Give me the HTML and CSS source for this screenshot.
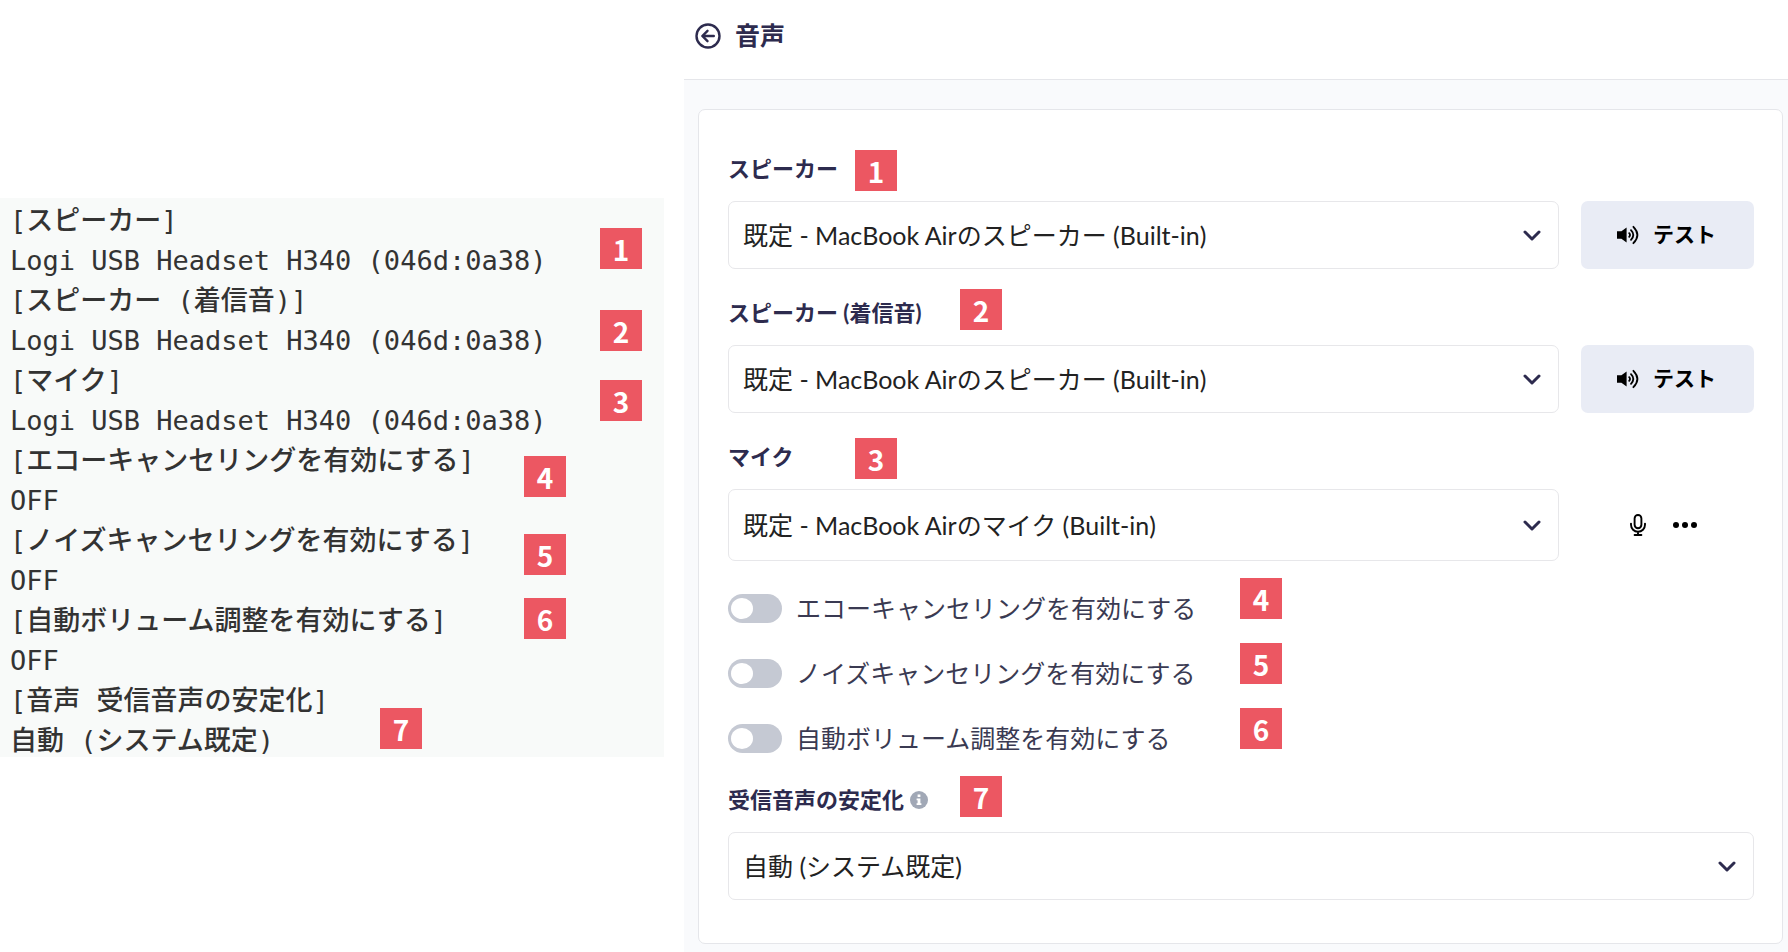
FILE: index.html
```html
<!DOCTYPE html>
<html lang="ja">
<head>
  <meta charset="UTF-8" />
  <meta name="viewport" content="width=device-width, initial-scale=1.0" />
  <title>音声</title>
  <link rel="stylesheet" href="styles.css">
</head>
<body>
  <div class="page">

    <section class="log-column">
      <div class="log">
        <div>[スピーカー]</div>
        <div>Logi USB Headset H340 (046d:0a38)</div>
        <div>[スピーカー (着信音)]</div>
        <div>Logi USB Headset H340 (046d:0a38)</div>
        <div>[マイク]</div>
        <div>Logi USB Headset H340 (046d:0a38)</div>
        <div>[エコーキャンセリングを有効にする]</div>
        <div>OFF</div>
        <div>[ノイズキャンセリングを有効にする]</div>
        <div>OFF</div>
        <div>[自動ボリューム調整を有効にする]</div>
        <div>OFF</div>
        <div>[音声 受信音声の安定化]</div>
        <div>自動 (システム既定)</div>

        <span class="badge log-1">1</span>
        <span class="badge log-2">2</span>
        <span class="badge log-3">3</span>
        <span class="badge log-4">4</span>
        <span class="badge log-5">5</span>
        <span class="badge log-6">6</span>
        <span class="badge log-7">7</span>
      </div>
    </section>

    <main class="settings">
      <header class="header">
        <button class="icon-button" type="button" aria-label="戻る">
          <svg width="26" height="26" viewBox="0 0 26 26" fill="none" stroke="currentColor" stroke-width="2.4" stroke-linecap="round" stroke-linejoin="round">
            <circle cx="13" cy="13" r="11.5" />
            <path d="M18.8 13H8M12.5 7.8L7.3 13l5.2 5.2" />
          </svg>
        </button>
        <h1>音声</h1>
      </header>

      <form class="card">
        <div class="field">
          <div class="label-row">
            <label for="speaker">スピーカー</label>
            <span class="badge near">1</span>
          </div>
          <div class="control-row">
            <div class="select">
              <select id="speaker"><option>既定 - MacBook Airのスピーカー (Built-in)</option></select>
              <svg class="chevron" width="18" height="12" viewBox="0 0 18 12"><path d="M2 2l7 7 7-7" /></svg>
            </div>
            <button class="test" type="button">
              <svg width="22" height="20" viewBox="0 0 22 20" fill="none" stroke="currentColor" stroke-width="1.8" stroke-linecap="round">
                <path d="M0 6.2h4.4L9.6 2.6v14.8l-5.2-3.6H0z" fill="currentColor" stroke="none" />
                <path d="M12.2 8.2q1.6 1.8 0 3.6M14 5.2q4.6 4.8 0 9.6M16.4 1.8q8 8.2 0 16.4" />
              </svg>
              <span>テスト</span>
            </button>
          </div>
        </div>

        <div class="field">
          <div class="label-row">
            <label for="ringer">スピーカー (着信音)</label>
            <span class="badge middle">2</span>
          </div>
          <div class="control-row">
            <div class="select">
              <select id="ringer"><option>既定 - MacBook Airのスピーカー (Built-in)</option></select>
              <svg class="chevron" width="18" height="12" viewBox="0 0 18 12"><path d="M2 2l7 7 7-7" /></svg>
            </div>
            <button class="test" type="button">
              <svg width="22" height="20" viewBox="0 0 22 20" fill="none" stroke="currentColor" stroke-width="1.8" stroke-linecap="round">
                <path d="M0 6.2h4.4L9.6 2.6v14.8l-5.2-3.6H0z" fill="currentColor" stroke="none" />
                <path d="M12.2 8.2q1.6 1.8 0 3.6M14 5.2q4.6 4.8 0 9.6M16.4 1.8q8 8.2 0 16.4" />
              </svg>
              <span>テスト</span>
            </button>
          </div>
        </div>

        <div class="field">
          <div class="label-row">
            <label for="mic">マイク</label>
            <span class="badge near">3</span>
          </div>
          <div class="control-row">
            <div class="select tall">
              <select id="mic"><option>既定 - MacBook Airのマイク (Built-in)</option></select>
              <svg class="chevron" width="18" height="12" viewBox="0 0 18 12"><path d="M2 2l7 7 7-7" /></svg>
            </div>
            <div class="mic-actions">
              <button class="icon-button" type="button" aria-label="マイク">
                <svg width="16" height="22" viewBox="0 0 16 22" fill="none" stroke="currentColor" stroke-width="1.9" stroke-linecap="round">
                  <rect x="4.6" y="1" width="6.8" height="13.2" rx="3.4" />
                  <path d="M1 9.6v1.2a7 7 0 0 0 14 0V9.6M8 17.8v3M4.6 21h6.8" />
                </svg>
              </button>
              <button class="icon-button" type="button" aria-label="その他">
                <svg width="24" height="8" viewBox="0 0 24 8" fill="currentColor">
                  <circle cx="3" cy="4" r="3" />
                  <circle cx="12" cy="4" r="3" />
                  <circle cx="21" cy="4" r="3" />
                </svg>
              </button>
            </div>
          </div>
        </div>

        <div class="toggles">
          <div class="toggle-row">
            <input type="checkbox" id="echo">
            <label for="echo">エコーキャンセリングを有効にする</label>
            <span class="badge far">4</span>
          </div>
          <div class="toggle-row">
            <input type="checkbox" id="noise">
            <label for="noise">ノイズキャンセリングを有効にする</label>
            <span class="badge far">5</span>
          </div>
          <div class="toggle-row">
            <input type="checkbox" id="volume">
            <label for="volume">自動ボリューム調整を有効にする</label>
            <span class="badge far">6</span>
          </div>
        </div>

        <div class="field">
          <div class="label-row">
            <label for="stable">受信音声の安定化</label>
            <svg class="info" width="18" height="18" viewBox="0 0 18 18">
              <circle cx="9" cy="9" r="9" fill="#a1a8b6" />
              <path d="M7.6 3.6h2.8v2.4H7.6zM6.6 7.4h3.8v4.8h1v1.8H6.6v-1.8h1V9.2h-1z" fill="#fff" />
            </svg>
            <span class="badge middle">7</span>
          </div>
          <div class="control-row">
            <div class="select">
              <select id="stable"><option>自動 (システム既定)</option></select>
              <svg class="chevron" width="18" height="12" viewBox="0 0 18 12"><path d="M2 2l7 7 7-7" /></svg>
            </div>
          </div>
        </div>
      </form>
    </main>

  </div>
</body>
</html>
```
FILE: styles.css
```css
* {
  box-sizing: border-box;
}
body {
  margin: 0;
  background: #fff;
  color: #2d2b4e;
  font-family: Lato, "Noto Sans CJK JP", sans-serif;
}
.page {
  display: grid;
  grid-template-columns: 684fr 1104fr;
  min-height: 100vh;
}

/* device log */
.log-column {
  display: flex;
  align-items: center;
  padding: 2px 20px 0 0;
}
.log {
  position: relative;
  width: 100%;
  padding: 3px 0 0 10px;
  background: #f8faf9;
  color: #333;
  font-family: "DejaVu Sans Mono", "Noto Sans CJK JP", monospace;
  font-size: 27px;
  font-weight: 500;
  line-height: 40px;
  white-space: nowrap;
}
/* the last line sits tight on the bottom edge */
.log div:last-of-type {
  margin-bottom: -4px;
}

/* numbered badges */
.badge {
  position: absolute;
  width: 42px;
  height: 41px;
  background: #ec5762;
  color: #fff;
  font-family: "Noto Sans CJK JP", sans-serif;
  font-size: 28px;
  font-weight: bold;
  line-height: 42px;
  text-align: center;
}
.log-1 { left: 600px; top: 30px; }
.log-2 { left: 600px; top: 112px; }
.log-3 { left: 600px; top: 182px; }
.log-4 { left: 524px; top: 258px; }
.log-5 { left: 524px; top: 336px; }
.log-6 { left: 524px; top: 400px; }
.log-7 { left: 380px; top: 510px; }
.near { left: 127px; top: -3px; }
.middle { left: 232px; top: -8px; }
.far { left: 512px; top: -16px; }

/* settings */
.settings {
  background: #f9fafc;
}
.header {
  display: flex;
  align-items: center;
  gap: 14px;
  height: 80px;
  padding: 0 11px 7px;
  background: #fff;
  border-bottom: 1px solid #e5e6ea;
}
h1 {
  margin: 0;
  padding-bottom: 2px;
  font-size: 25px;
  line-height: 32px;
}
.icon-button {
  display: flex;
  padding: 0;
  background: none;
  border: none;
  color: inherit;
  cursor: pointer;
}
.card {
  margin: 29px 5px 7px 14px;
  padding: 43px 28px 43px 29px;
  background: #fff;
  border: 1px solid #e5e6ea;
  border-radius: 7px;
}
.field + .field {
  margin-top: 28px;
}
.label-row {
  position: relative;
  display: flex;
  align-items: center;
  gap: 6px;
  height: 32px;
  margin-bottom: 16px;
  font-size: 22px;
  font-weight: bold;
}
label {
  padding-bottom: 4px;
}
.control-row {
  display: flex;
  gap: 22px;
}
.select {
  position: relative;
  flex: 1;
  height: 68px;
}
.tall {
  height: 72px;
}
select {
  width: 100%;
  height: 100%;
  padding: 0 56px 0 14px;
  appearance: none;
  background: #fff;
  border: 1px solid #e7e7ea;
  border-radius: 7px;
  color: #222;
  font-family: inherit;
  font-size: 25px;
}
.chevron {
  position: absolute;
  right: 18px;
  top: calc(50% - 5px);
  fill: none;
  stroke: #2d2b4e;
  stroke-width: 3;
  stroke-linecap: round;
  stroke-linejoin: round;
  pointer-events: none;
}
.test {
  display: flex;
  align-items: center;
  justify-content: center;
  gap: 14px;
  width: 173px;
  padding: 0 8px 0 6px;
  background: #e9ecf5;
  border: none;
  border-radius: 7px;
  color: #000;
  font-family: inherit;
  font-size: 21px;
  font-weight: bold;
  cursor: pointer;
}
.test span {
  padding-bottom: 4px;
}
.mic-actions {
  display: flex;
  align-items: center;
  justify-content: center;
  gap: 27px;
  width: 173px;
  padding-right: 8px;
  color: #000;
}
.toggles {
  display: grid;
  gap: 36px;
  margin: 33px 0 31px;
}
.toggle-row {
  position: relative;
  display: flex;
  align-items: center;
  gap: 14px;
  height: 29px;
  color: #3a3a52;
  font-size: 25px;
}
input[type="checkbox"] {
  width: 54px;
  height: 29px;
  margin: 0;
  padding: 4px 3px;
  appearance: none;
  background: #c5c9d3;
  border-radius: 15px;
  cursor: pointer;
}
input[type="checkbox"]::before {
  content: "";
  display: block;
  width: 22px;
  height: 21px;
  background: #fff;
  border-radius: 50%;
}
input[type="checkbox"]:checked {
  background: #2d2b4e;
}
input[type="checkbox"]:checked::before {
  margin-left: auto;
}
```
